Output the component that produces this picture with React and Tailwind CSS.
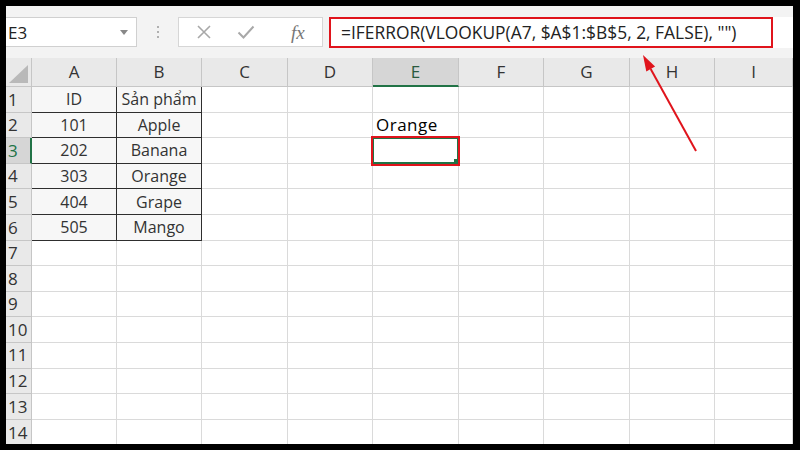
import React from "react";

const cols = ["A", "B", "C", "D", "E", "F", "G", "H", "I"];
const colW = [85, 85, 86, 85, 86, 85, 86, 85, 78];
const data = {
  1: ["ID", "Sản phẩm"],
  2: ["101", "Apple"],
  3: ["202", "Banana"],
  4: ["303", "Orange"],
  5: ["404", "Grape"],
  6: ["505", "Mango"],
};
const rows = Array.from({ length: 14 }, (_, i) => i + 1);

export default function App() {
  const font = { fontFamily: '"Open Sans", "Noto Sans", sans-serif' };
  return (
    <div className="w-[800px] h-[450px] bg-black pt-[6px] pl-[6px] pr-[7px] pb-[6px] overflow-hidden" style={font}>
      <div className="relative w-[787px] h-[438px] bg-white flex flex-col overflow-hidden">
        {/* toolbar */}
        <div className="h-[52px] bg-[#f3f3f3] flex items-start pt-[11px] shrink-0">
          <div className="w-[131px] h-[30px] bg-white border border-[#d0d0d0] border-l-0 flex items-center justify-between pl-[2px] pr-[8px]">
            <span className="text-[17px] text-[#222] leading-none">E3</span>
            <svg width="8" height="5" viewBox="0 0 8 5"><path d="M0 0 L8 0 L4 5 Z" fill="#888" /></svg>
          </div>
          <div className="w-[41px] h-[30px] flex flex-col items-center justify-center gap-[3px]">
            <span className="w-[2px] h-[2px] bg-[#b0b0b0]" />
            <span className="w-[2px] h-[2px] bg-[#b0b0b0]" />
            <span className="w-[2px] h-[2px] bg-[#b0b0b0]" />
          </div>
          <div className="w-[145px] h-[30px] bg-white border border-[#d6d6d6] flex items-center">
            <svg className="ml-[17px]" width="16" height="16" viewBox="0 0 16 16"><path d="M2 2 L14 14 M14 2 L2 14" stroke="#a8a8a8" strokeWidth="1.6" /></svg>
            <svg className="ml-[25px]" width="18" height="16" viewBox="0 0 18 16"><path d="M1.5 8.5 L6.5 13.5 L16.5 2.5" stroke="#a8a8a8" strokeWidth="2" fill="none" /></svg>
            <span className="ml-[36px] text-[19px] italic text-[#777] leading-none" style={{ fontFamily: '"Liberation Serif", serif' }}>fx</span>
          </div>
          <div className="ml-[6px] flex-1 h-[31px] bg-white flex items-center">
            <div className="w-[444px] h-[31px] border-2 border-[#e0141c] flex items-center pl-[10px]">
              <span className="text-[17.4px] text-[#222] whitespace-nowrap leading-none">=IFERROR(VLOOKUP(A7, $A$1:$B$5, 2, FALSE), "")</span>
            </div>
          </div>
        </div>
        {/* sheet */}
        <div
          className="grid flex-1"
          style={{
            gridTemplateColumns: `26px ${colW.map((w) => w + "px").join(" ")}`,
            gridTemplateRows: "29px repeat(13, 25.6px) 1fr",
          }}
        >
          {/* corner */}
          <div className="bg-[#e9e9e9] border-r border-b border-[#c6c6c6] relative">
            <svg className="absolute right-[3px] bottom-[3px]" width="19" height="18" viewBox="0 0 19 18"><path d="M19 0 L19 18 L0 18 Z" fill="#b9b9b9" /></svg>
          </div>
          {cols.map((c) => (
            <div
              key={c}
              className={
                c === "E"
                  ? "bg-[#d6d6d6] border-r border-[#c6c6c6] border-b-2 border-b-[#217346] flex items-center justify-center text-[17px] text-[#2a5a3e]"
                  : "bg-[#e9e9e9] border-r border-b border-[#c6c6c6] flex items-center justify-center text-[17px] text-[#333]"
              }
            >
              {c}
            </div>
          ))}
          {rows.map((r) => (
            <React.Fragment key={r}>
              <div
                className={
                  r === 3
                    ? "bg-[#d6d6d6] border-r-2 border-r-[#217346] border-b border-[#c6c6c6] flex items-center pl-[2px] text-[17px] text-[#217346]"
                    : "bg-[#e9e9e9] border-r border-b border-[#c6c6c6] flex items-center pl-[2px] text-[17px] text-[#333]"
                }
              >
                {r}
              </div>
              {cols.map((c, ci) => {
                const inTable = r <= 6 && ci < 2;
                if (inTable) {
                  return (
                    <div key={c} className="bg-[#f7f7f7] border-r border-b border-[#2e2e2e] flex items-center justify-center text-[16px] text-[#333]">
                      {data[r][ci]}
                    </div>
                  );
                }
                if (c === "E" && r === 2) {
                  return (
                    <div key={c} className="border-r border-b border-[#dadada] flex items-end pl-[3px] pb-[0px] text-[17px] tracking-[0.5px] font-medium text-black leading-[24px]">
                      Orange
                    </div>
                  );
                }
                if (c === "E" && r === 3) {
                  return (
                    <div key={c} className="relative border-r border-b border-[#dadada]">
                      <div className="absolute -top-[1px] -left-[1px] -right-[1px] -bottom-[1px] border-2 border-[#217346]" />
                      <div className="absolute -top-[2px] -left-[2px] -right-[2px] -bottom-[3px] border-2 border-[#e0141c]" />
                      <div className="absolute right-[0px] bottom-[0px] w-[4px] h-[4px] bg-[#217346]" />
                    </div>
                  );
                }
                return <div key={c} className="border-r border-b border-[#dadada]" />;
              })}
            </React.Fragment>
          ))}
        </div>
        {/* arrow */}
        <svg className="absolute left-0 top-0 pointer-events-none" width="787" height="438" viewBox="0 0 787 438">
          <line x1="690" y1="145" x2="644.7" y2="63" stroke="#e0141c" strokeWidth="2" />
          <path d="M637 49 L649.1 60.6 L640.3 65.4 Z" fill="#e0141c" />
        </svg>
      </div>
    </div>
  );
}
